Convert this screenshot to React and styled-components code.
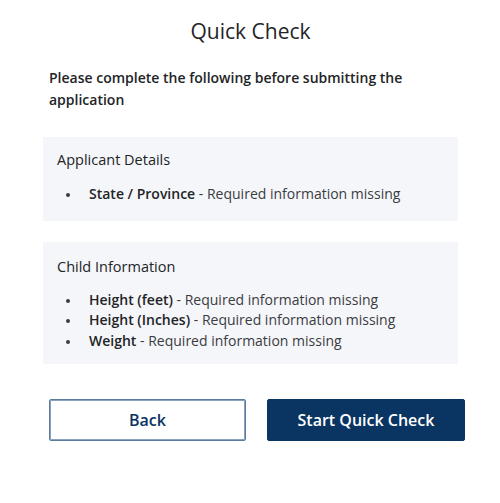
import styled, { createGlobalStyle } from "styled-components";

const GlobalStyle = createGlobalStyle`
  body {
    margin: 0;
    background: #ffffff;
    font-family: "Open Sans", "Liberation Sans", sans-serif;
    color: #222426;
  }
`;

const Page = styled.div`
  width: 500px;
  height: 503px;
  box-sizing: border-box;
  padding: 16px 42px 0 43px;
  display: flex;
  flex-direction: column;
`;

const Title = styled.h1`
  margin: 0;
  text-align: center;
  font-size: 21px;
  font-weight: 400;
  line-height: 30px;
  color: #222426;
`;

const Intro = styled.p`
  margin: 21px 0 0 6px;
  font-size: 14px;
  font-weight: 600;
  line-height: 22px;
  color: #222426;
`;

const Section = styled.div`
  margin-top: ${(p) => p.$top}px;
  background: #f5f6fa;
  padding: ${(p) => p.$pad};
`;

const SectionTitle = styled.div`
  font-size: 14.5px;
  line-height: 20px;
  color: #222426;
`;

const List = styled.ul`
  margin: ${(p) => p.$gap}px 0 0 0;
  padding: 0 0 0 24px;
  font-size: 14px;
  line-height: 20.5px;
  color: #3a3c3f;
`;

const Item = styled.li`
  padding-left: 8px;
  &::marker {
    font-size: 12px;
  }
`;

const Field = styled.span`
  font-weight: 600;
  color: #222426;
`;

const Actions = styled.div`
  margin: 35px 0 0 6px;
  display: grid;
  grid-template-columns: 197px 198px;
  gap: 21px;
`;

const Button = styled.button`
  height: 42px;
  box-sizing: border-box;
  border-radius: 2px;
  font-family: "Open Sans", "Liberation Sans", sans-serif;
  font-size: 16px;
  font-weight: 600;
  cursor: pointer;
  border: 1px solid ${(p) => (p.$primary ? "#0a3462" : "#5a7a9e")};
  background: ${(p) => (p.$primary ? "#0a3462" : "#ffffff")};
  color: ${(p) => (p.$primary ? "#ffffff" : "#0a3462")};
  ${(p) => !p.$primary && "box-shadow: inset 0 0 0 1px #8aa2bd;"}
`;

const sections = [
  {
    title: "Applicant Details",
    top: 26,
    pad: "13px 14px 16px 14px",
    gap: 14,
    items: [["State / Province", "Required information missing"]],
  },
  {
    title: "Child Information",
    top: 21,
    pad: "15px 14px 13px 14px",
    gap: 13,
    items: [
      ["Height (feet)", "Required information missing"],
      ["Height (Inches)", "Required information missing"],
      ["Weight", "Required information missing"],
    ],
  },
];

export default function App() {
  return (
    <>
      <GlobalStyle />
      <Page>
        <Title>Quick Check</Title>
        <Intro>Please complete the following before submitting the application</Intro>
        {sections.map((s) => (
          <Section key={s.title} $top={s.top} $pad={s.pad}>
            <SectionTitle>{s.title}</SectionTitle>
            <List $gap={s.gap}>
              {s.items.map(([field, msg]) => (
                <Item key={field}>
                  <Field>{field}</Field> - {msg}
                </Item>
              ))}
            </List>
          </Section>
        ))}
        <Actions>
          <Button>Back</Button>
          <Button $primary>Start Quick Check</Button>
        </Actions>
      </Page>
    </>
  );
}
